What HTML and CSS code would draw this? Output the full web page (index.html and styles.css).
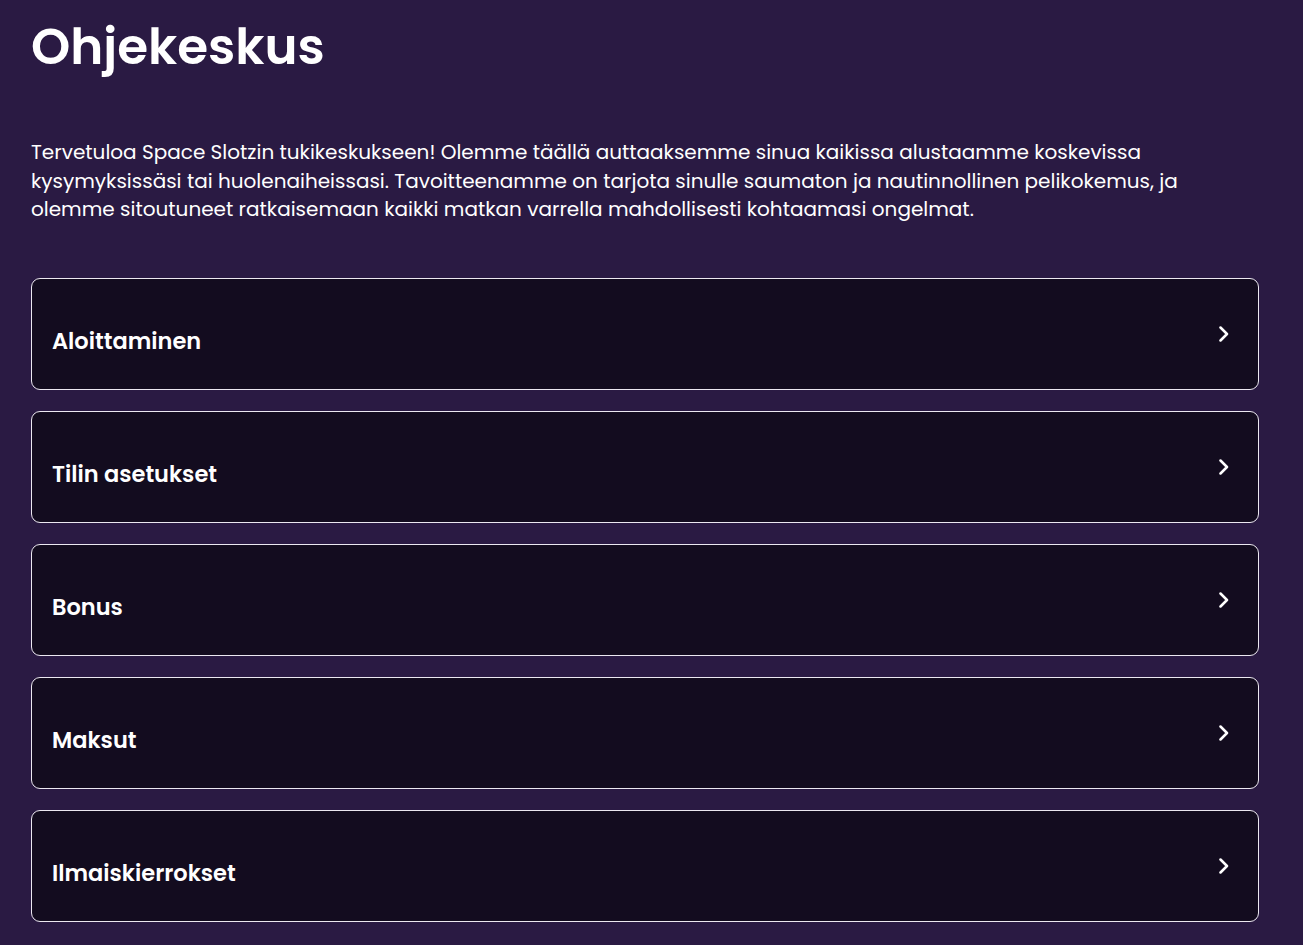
FILE: index.html
```html
<!DOCTYPE html>
<html lang="fi">
<head>
    <meta charset="UTF-8">
    <title>Ohjekeskus</title>
    <meta name="viewport" content="width=device-width, initial-scale=1.0">
    <link rel="stylesheet" href="styles.css">
</head>
<body>
    <main class="help">
        <h1 class="help-title">Ohjekeskus</h1>

        <p class="help-intro">Tervetuloa Space Slotzin tukikeskukseen! Olemme täällä auttaaksemme sinua kaikissa alustaamme koskevissa kysymyksissäsi tai huolenaiheissasi. Tavoitteenamme on tarjota sinulle saumaton ja nautinnollinen pelikokemus, ja olemme sitoutuneet ratkaisemaan kaikki matkan varrella mahdollisesti kohtaamasi ongelmat.</p>

        <div class="topics">
            <a class="topic" href="#">
                <span class="topic-name">Aloittaminen</span>
                <svg class="chevron" width="10" height="16" viewBox="0 0 10 16"><path d="M1.5 1.5 8 8l-6.5 6.5"/></svg>
            </a>
            <a class="topic" href="#">
                <span class="topic-name">Tilin asetukset</span>
                <svg class="chevron" width="10" height="16" viewBox="0 0 10 16"><path d="M1.5 1.5 8 8l-6.5 6.5"/></svg>
            </a>
            <a class="topic" href="#">
                <span class="topic-name">Bonus</span>
                <svg class="chevron" width="10" height="16" viewBox="0 0 10 16"><path d="M1.5 1.5 8 8l-6.5 6.5"/></svg>
            </a>
            <a class="topic" href="#">
                <span class="topic-name">Maksut</span>
                <svg class="chevron" width="10" height="16" viewBox="0 0 10 16"><path d="M1.5 1.5 8 8l-6.5 6.5"/></svg>
            </a>
            <a class="topic" href="#">
                <span class="topic-name">Ilmaiskierrokset</span>
                <svg class="chevron" width="10" height="16" viewBox="0 0 10 16"><path d="M1.5 1.5 8 8l-6.5 6.5"/></svg>
            </a>
        </div>
    </main>
</body>
</html>
```

FILE: styles.css
```css
body {
    margin: 0;
    background: #2a1a43;
    color: #fff;
    font-family: Poppins, "Open Sans", sans-serif;
}

.help {
    width: 1228px;
    padding: 12px 31px 40px;
}

.help-title {
    margin: 0;
    font-size: 50px;
    font-weight: 600;
    line-height: 70px;
}

.help-intro {
    margin: 56px 0 0;
    font-size: 20px;
    line-height: 28.5px;
}

.topics {
    display: flex;
    flex-direction: column;
    gap: 21px;
    margin-top: 54px;
}

.topic {
    display: flex;
    align-items: center;
    justify-content: space-between;
    height: 110px;
    padding: 0 29px 0 20px;
    background: #130c1f;
    border: 1px solid #ece8f1;
    border-radius: 9px;
    color: #fff;
    text-decoration: none;
}

.topic-name {
    padding-top: 14px;
    font-size: 22.5px;
    font-weight: 600;
}

.chevron {
    fill: none;
    stroke: #fff;
    stroke-width: 2.5;
    stroke-linecap: round;
    stroke-linejoin: round;
}
```
